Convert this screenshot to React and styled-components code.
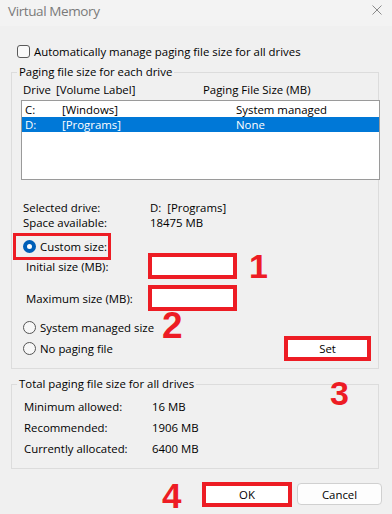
import React from 'react'
import styled, { createGlobalStyle } from 'styled-components'

const RED = '#ed1c24'

const drives = [
    { letter: 'C:', label: '[Windows]', size: 'System managed' },
    { letter: 'D:', label: '[Programs]', size: 'None', selected: true },
]

const totals = [
    { label: 'Minimum allowed:', value: '16 MB' },
    { label: 'Recommended:', value: '1906 MB' },
    { label: 'Currently allocated:', value: '6400 MB' },
]

// red numbered annotations drawn over the dialog
const marks = [
    { n: 1, top: 249, left: 249, size: 34 },
    { n: 2, top: 307, left: 162, size: 37 },
    { n: 3, top: 376, left: 330, size: 34 },
    { n: 4, top: 478, left: 162, size: 35 },
]

const App = () => {
    return (
        <Window>
            <GlobalStyle />
            <TitleBar>
                <Title>Virtual Memory</Title>
                <CloseIcon viewBox="0 0 10 10">
                    <path d="M0.5,0.5 L9.5,9.5 M9.5,0.5 L0.5,9.5" />
                </CloseIcon>
            </TitleBar>
            <Body>
                <CheckRow>
                    <Checkbox />
                    <span>Automatically manage paging file size for all drives</span>
                </CheckRow>

                <Group>
                    <Legend>Paging file size for each drive</Legend>
                    <GroupBody $top={2} $left={11} $right={11} $bottom={11}>
                        <ColumnHeader>
                            <span>Drive</span>
                            <span>[Volume Label]</span>
                            <span>Paging File Size (MB)</span>
                        </ColumnHeader>
                        <ListBox>
                            {drives.map(d => (
                                <ListRow key={d.letter} $selected={d.selected}>
                                    <span>{d.letter}</span>
                                    <span>{d.label}</span>
                                    <span>{d.size}</span>
                                </ListRow>
                            ))}
                        </ListBox>
                        <InfoGrid>
                            <span>Selected drive:</span>
                            <span>D:&nbsp; [Programs]</span>
                            <span>Space available:</span>
                            <span>18475 MB</span>
                        </InfoGrid>
                        <RadioOption $marked $gap={6} $height={21}>
                            <RadioDot $checked />
                            <span>Custom size:</span>
                        </RadioOption>
                        <SizeRow $gap={0}>
                            <SizeLabel>Initial size (MB):</SizeLabel>
                            <SizeInput type="text" />
                        </SizeRow>
                        <SizeRow $gap={14}>
                            <SizeLabel>Maximum size (MB):</SizeLabel>
                            <SizeInput type="text" />
                        </SizeRow>
                        <RadioOption $gap={12} $height={16}>
                            <RadioDot />
                            <span>System managed size</span>
                        </RadioOption>
                        <LastRow>
                            <RadioOption $gap={0} $height={17}>
                                <RadioDot />
                                <span>No paging file</span>
                            </RadioOption>
                            <SetButton>Set</SetButton>
                        </LastRow>
                    </GroupBody>
                </Group>

                <Group $gap={7}>
                    <Legend>Total paging file size for all drives</Legend>
                    <GroupBody $top={4} $left={12} $right={0} $bottom={9}>
                        {totals.map(t => (
                            <StatRow key={t.label}>
                                <span>{t.label}</span>
                                <span>{t.value}</span>
                            </StatRow>
                        ))}
                    </GroupBody>
                </Group>

                <ButtonRow>
                    <OkButton>OK</OkButton>
                    <CancelButton>Cancel</CancelButton>
                </ButtonRow>
            </Body>

            {marks.map(m => (
                <Mark key={m.n} $size={m.size} style={{ top: m.top, left: m.left }}>
                    {m.n}
                </Mark>
            ))}
        </Window>
    )
}

export default App;

const GlobalStyle = createGlobalStyle`
    html, body {
        margin: 0;
        padding: 0;
        background: #f0f0f0;
    }
    body {
        font-family: "Open Sans", "Noto Sans", sans-serif;
    }
`

const Window = styled.div`
    position: relative;
    width: 392px;
    height: 514px;
    overflow: hidden;
    background: #f0f0f0;
    color: #000;
    font-size: 11.4px;
    display: flex;
    flex-direction: column;
`

const TitleBar = styled.div`
    height: 26px;
    box-sizing: border-box;
    padding: 0 10px 0 8px;
    background: #f3f3f3;
    display: flex;
    align-items: flex-start;
    justify-content: space-between;
`

const Title = styled.span`
    font-size: 13.5px;
    line-height: 20px;
    letter-spacing: -0.4px;
    color: #7a7a7a;
    margin-top: 1px;
`

const CloseIcon = styled.svg`
    width: 10px;
    height: 10px;
    margin-top: 5px;
    fill: none;
    stroke: #8a8a8a;
    stroke-width: 1;
`

const Body = styled.div`
    padding: 0 13px 0 11px;
    display: flex;
    flex-direction: column;
`

const CheckRow = styled.div`
    display: flex;
    align-items: center;
    gap: 4px;
    height: 16px;
    margin: 17px 0 5px 6px;
`

const Checkbox = styled.span`
    width: 13px;
    height: 13px;
    box-sizing: border-box;
    border: 1px solid #5a5a5a;
    border-radius: 3px;
    background: #f9f9f9;
`

const Group = styled.fieldset`
    margin: ${props => props.$gap || 0}px 0 0 0;
    padding: 0;
    min-width: 0;
    border: 1px solid #dcdcdc;
`

const Legend = styled.legend`
    margin-left: 5px;
    padding: 0 2px;
    line-height: 16px;
`

const GroupBody = styled.div`
    display: flex;
    flex-direction: column;
    padding: ${p => p.$top}px ${p => p.$right}px ${p => p.$bottom}px ${p => p.$left}px;
`

const ColumnHeader = styled.div`
    display: grid;
    grid-template-columns: 33px 147px 1fr;
    height: 16px;
    line-height: 16px;
`

const ListBox = styled.div`
    margin: 2px -13px 0 -2px;
    height: 80px;
    box-sizing: border-box;
    border: 1px solid #9a9a9a;
    background: #fff;
    padding-top: 1px;
`

const ListRow = styled.div`
    display: grid;
    grid-template-columns: 37px 174px 1fr;
    height: 15px;
    line-height: 15px;
    padding-left: 3px;
    background: ${p => p.$selected ? '#0078d7' : 'transparent'};
    color: ${p => p.$selected ? '#fff' : '#000'};
`

const InfoGrid = styled.div`
    display: grid;
    grid-template-columns: 127px 1fr;
    line-height: 15px;
    margin-top: 20px;
`

const RadioOption = styled.label`
    display: flex;
    align-items: center;
    align-self: flex-start;
    gap: 4px;
    height: ${p => p.$height}px;
    margin-top: ${p => p.$gap}px;
    margin-left: ${p => p.$marked ? -7 : 0}px;
    padding: ${p => p.$marked ? '0 1px 0 7px' : '0'};
    outline: ${p => p.$marked ? `3px solid ${RED}` : 'none'};
`

const RadioDot = styled.span`
    width: 13px;
    height: 13px;
    box-sizing: border-box;
    border-radius: 50%;
    border: ${p => p.$checked ? '4px solid #005fb8' : '1px solid #555'};
    background: ${p => p.$checked ? '#fff' : '#f7f7f7'};
`

const SizeRow = styled.div`
    display: flex;
    align-items: center;
    height: 18px;
    padding-left: 3px;
    margin-top: ${p => p.$gap}px;
`

const SizeLabel = styled.span`
    width: 126px;
`

const SizeInput = styled.input`
    width: 81px;
    height: 18px;
    box-sizing: border-box;
    border: none;
    background: #fff;
    outline: 4px solid ${RED};
    font: inherit;
`

const LastRow = styled.div`
    display: flex;
    align-items: center;
    justify-content: space-between;
    height: 17px;
    margin-top: 5px;
`

const SetButton = styled.button`
    width: 79px;
    height: 17px;
    padding: 0;
    border: none;
    background: #fff;
    outline: 4px solid ${RED};
    font: inherit;
    color: #000;
`

const StatRow = styled.div`
    display: grid;
    grid-template-columns: 128px 1fr;
    height: 21px;
    line-height: 21px;
`

const ButtonRow = styled.div`
    display: flex;
    align-items: center;
    justify-content: flex-end;
    gap: 9px;
    height: 22px;
    margin: 14px -3px 0 0;
`

const OkButton = styled.button`
    width: 82px;
    height: 17px;
    padding: 0;
    border: none;
    background: #fff;
    outline: 4px solid ${RED};
    font: inherit;
    color: #000;
`

const CancelButton = styled.button`
    width: 85px;
    height: 22px;
    padding: 0;
    box-sizing: border-box;
    border: 1px solid #d0d0d0;
    border-radius: 4px;
    background: #fdfdfd;
    font: inherit;
    color: #000;
`

const Mark = styled.span`
    position: absolute;
    font-family: "Liberation Sans", Arial, sans-serif;
    font-weight: 700;
    font-size: ${p => p.$size}px;
    line-height: 1;
    color: ${RED};
`
